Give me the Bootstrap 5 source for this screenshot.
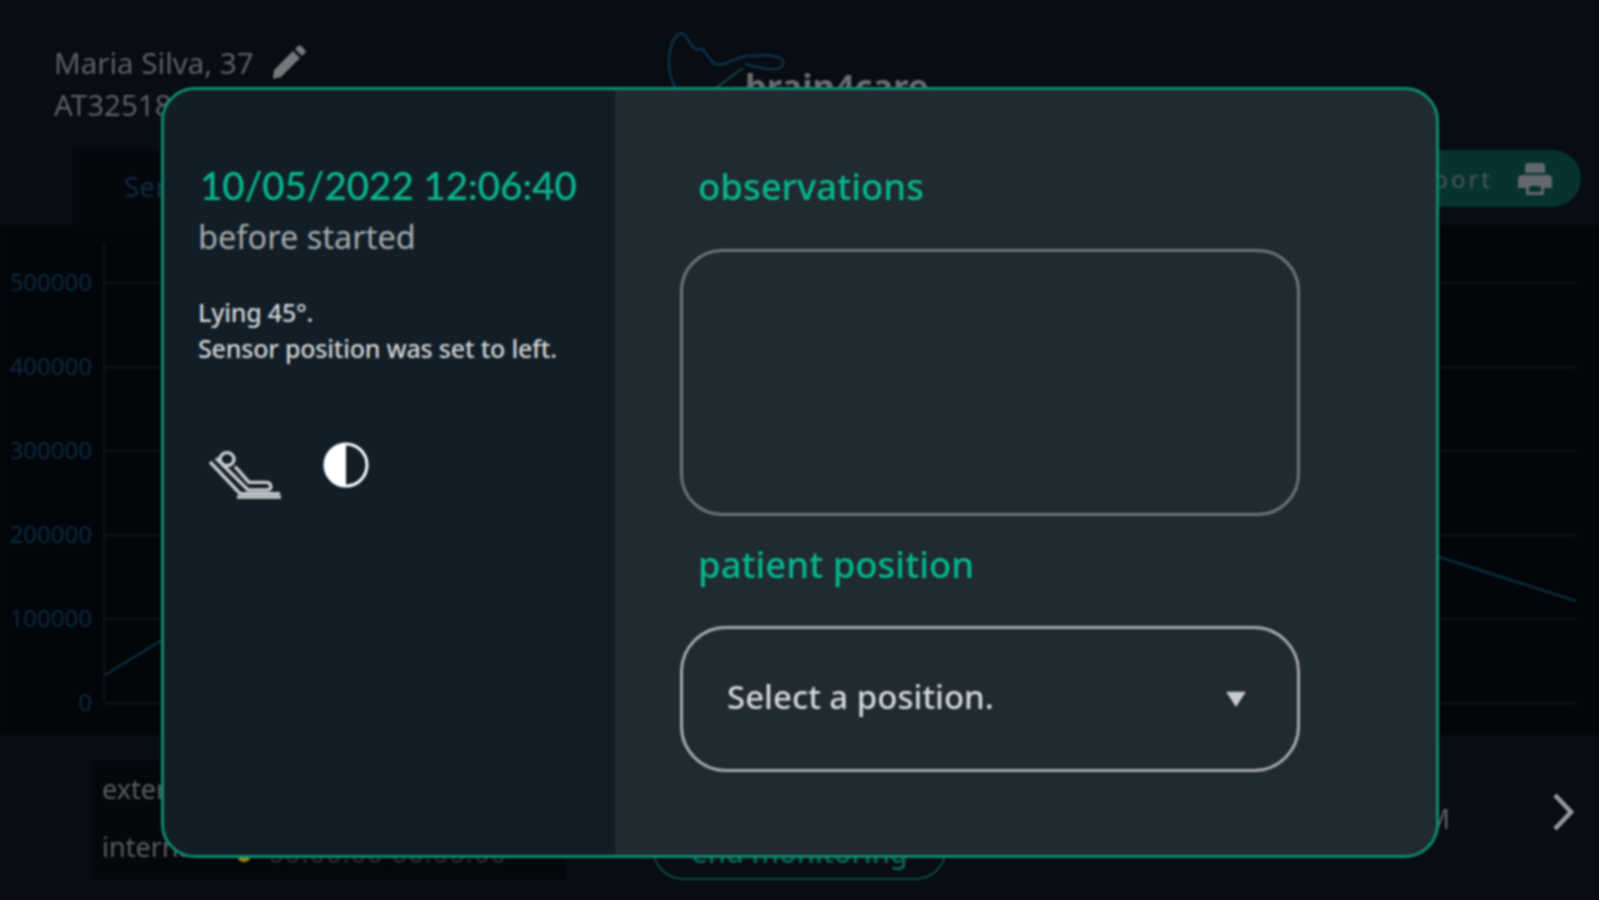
<!DOCTYPE html>
<html lang="en">
<head>
    <meta charset="UTF-8">
    <title>brain4care - monitoring</title>
    <link href="https://cdn.jsdelivr.net/npm/bootstrap@5.3.0/dist/css/bootstrap.min.css" rel="stylesheet">
    <style>
        html, body { height: 100%; overflow: hidden; }
        body { background: #080c13; font-family: "Noto Sans", "Lato", sans-serif; color: #5d6064; }
        .screen-wrap { width: 1599px; height: 900px; filter: blur(.8px); }
        .top-bar { height: 150px; padding: 42px 54px 0; }
        .patient-name { font-size: 29.5px; line-height: 42px; }
        .logo-box { width: 300px; margin-right: 580px; }
        .logo-word { font-size: 34.5px; margin: 18px 0 0 -45px; color: #6b6d70; font-weight: 700; }
        .tab-bar { height: 75px; }
        .tab-dark { margin-left: 72px; width: 180px; background: #04070c; color: #0d2c44; font-size: 28px; padding: 15px 52px; }
        .report-pill { width: 320px; height: 57px; margin: 0 18px 0 0; border-radius: 29px; background: #06332f; color: #4f5659; font-size: 24px; letter-spacing: 3px; }
        .print-ico { margin-right: 28px; }
        .chart-band { height: 510px; background: #020509; }
        .chart-band svg { display: block; }
        .chart-label { fill: #0c2b41; font-size: 24px; font-family: "Noto Sans", sans-serif; }
        .foot-bar { height: 165px; padding: 25px 18px 0 92px; }
        .legend-box { width: 473px; height: 120px; background: #04070c; padding: 0 10px; font-size: 27px; line-height: 58px; color: #5a5d60; }
        .legend-val { margin: 6px 0 0 18px; color: #2c2f32; letter-spacing: 1px; }
        .legend-dot { width: 14px; height: 14px; margin: 30px 0 0 36px; border-radius: 50%; background: #a08a12; flex-shrink: 0; }
        .stop-btn { width: 295px; height: 120px; margin-left: 87px; border: 2px solid #0b4a40; border-radius: 0 0 32px 32px; color: #0a6a58; font-size: 29px; padding-bottom: 5px; font-weight: 500; }
        .foot-clock { font-size: 27px; margin: 39px 101px 0 0; }
        .foot-arrow { margin: 32px 6px 0 0; }
        .dlg-box { position: absolute; left: 161px; top: 87px; width: 1278px; height: 771px; border: 3px solid #0e8a70; border-radius: 34px; overflow: hidden; background: #1f2a31; }
        .dlg-side { width: 451px; background: #121e27; padding: 71px 0 0 36px; }
        .dlg-date { font-size: 38.5px; line-height: 48px; color: #07b68e; font-family: "Lato", sans-serif; font-weight: 500; }
        .dlg-state { font-size: 32.5px; line-height: 46px; color: #a7abae; margin: 5px 0 0 -2px; }
        .dlg-note { font-size: 25px; line-height: 36px; color: #d2d5d7; margin: 34px 0 0 -2px; font-weight: 500; letter-spacing: -.2px; }
        .dlg-icons { margin-top: 82px; gap: 37px; padding-left: 7px; }
        .half-dot { margin-top: -7px; }
        .dlg-main { padding: 73px 0 0 65px; width: 685px; }
        .dlg-title { font-size: 36.5px; line-height: 46px; color: #07b68e; margin: 0 0 0 18px; font-weight: 500; }
        .dlg-area.form-control { width: 620px; height: 267px; margin-top: 40px; margin-bottom: 25px; background: transparent; border: 3px solid #6d7478; border-radius: 42px; resize: none; }
        .dlg-select.form-select { width: 620px; height: 146px; margin-top: 39px; padding: 0 0 4px 44px; background-color: transparent; color: #d7d9db; border: 3.5px solid #a5a9ac; border-radius: 46px; font-size: 33px; font-weight: 500; font-family: "Noto Sans", sans-serif; background-size: 22px 18px; background-position: right 50px center; background-image: url("data:image/svg+xml,%3csvg xmlns='http://www.w3.org/2000/svg' viewBox='0 0 24 20'%3e%3cpath fill='%23c9cccd' d='M1 2h22L12 19z'/%3e%3c/svg%3e"); }
    </style>
</head>
<body>
    <div class="screen-wrap position-relative">

        <header class="top-bar d-flex justify-content-between">
            <div class="patient-name">
                <div class="d-flex align-items-center gap-3">Maria Silva, 37
                    <svg width="36" height="36" viewBox="0 0 36 36"><path fill="#77797c" d="M3 34l1-9L23 6l7 7-19 19zM25 4l3-3c1-1 2-1 3 0l4 4c1 1 1 2 0 3l-3 3z"/></svg>
                </div>
                <div>AT325187</div>
            </div>
            <div class="logo-box d-flex">
                <svg width="125" height="70" viewBox="0 0 125 70" class="flex-shrink-0" style="margin-top:-14px">
                    <path fill="none" stroke="#0f3148" stroke-width="2.5" d="M12 62C0 45 2 15 14 6c8-5 10 14 18 16 6-6 10 8 18 14 8 4 20-8 36-8 20-2 34 0 32 8-2 8-18 6-38 0"/>
                    <path fill="none" stroke="#123c38" stroke-width="2.5" d="M12 62c10 6 26 8 36 0l30-22"/>
                </svg>
                <div class="logo-word">brain4care</div>
            </div>
        </header>

        <div class="tab-bar d-flex justify-content-between">
            <div class="tab-dark">Sensor</div>
            <div class="report-pill d-flex align-items-center justify-content-end gap-4">
                <span>export report</span>
                <svg class="print-ico" width="36" height="36" viewBox="0 0 36 36"><path fill="#62686b" d="M10 2h16l2 2v8H8V4zM5 14h26c2 0 4 2 4 4v9h-8v7H9v-7H1v-9c0-2 2-4 4-4zm9 11c-1 0-2 1-2 2v4h12v-4c0-1-1-2-2-2z"/></svg>
            </div>
        </div>

        <section class="chart-band">
            <svg width="1599" height="510" viewBox="0 0 1599 510">
                <g stroke="#12151a" stroke-width="2">
                    <path d="M104 20v455"/>
                    <path d="M104 58h1472M104 142h1472M104 226h1472M104 310h1472M104 394h1472M104 478h1472"/>
                </g>
                <g class="chart-label" text-anchor="end">
                    <text x="92" y="66">500000</text>
                    <text x="92" y="150">400000</text>
                    <text x="92" y="234">300000</text>
                    <text x="92" y="318">200000</text>
                    <text x="92" y="402">100000</text>
                    <text x="92" y="486">0</text>
                </g>
                <path fill="none" stroke="#0b2d3e" stroke-width="2.5" d="M105 450l60-37M1430 329l146 47"/>
            </svg>
        </section>

        <footer class="foot-bar d-flex align-items-start">
            <div class="legend-box">
                <div>external</div>
                <div class="d-flex align-items-start">internal <span class="legend-dot"></span><span class="legend-val">00:00:00 00:00:00</span></div>
            </div>
            <div class="stop-btn d-flex align-items-end justify-content-center">end monitoring</div>
            <div class="foot-clock ms-auto">12:06:40 PM</div>
            <svg class="foot-arrow" width="24" height="40" viewBox="0 0 24 40"><path fill="none" stroke="#9a9da0" stroke-width="4.5" d="M4 3l16 17L4 37"/></svg>
        </footer>

        <div class="dlg-box d-flex">
            <aside class="dlg-side">
                <div class="dlg-date">10/05/2022 12:06:40</div>
                <div class="dlg-state">before started</div>
                <div class="dlg-note">Lying 45°.<br>Sensor position was set to left.</div>
                <div class="dlg-icons d-flex align-items-start">
                    <svg width="78" height="52" viewBox="0 0 78 56" preserveAspectRatio="none">
                        <g fill="none" stroke="#c9cccd" stroke-width="3.5">
                            <circle cx="20" cy="12" r="7"/>
                            <path d="M3 15l30 34h40"/>
                            <path d="M9 11l32 34h20c4 0 4-8-2-8H42L28 20"/>
                            <path d="M30 53h44"/>
                        </g>
                    </svg>
                    <svg class="half-dot" width="48" height="48" viewBox="0 0 48 48">
                        <circle cx="24" cy="24" r="21" fill="none" stroke="#fff" stroke-width="3"/>
                        <path fill="#fff" d="M24 3a21 21 0 0 0 0 42z"/>
                    </svg>
                </div>
            </aside>
            <main class="dlg-main">
                <div class="dlg-title">observations</div>
                <textarea class="dlg-area form-control"></textarea>
                <div class="dlg-title">patient position</div>
                <select class="dlg-select form-select">
                    <option>Select a position.</option>
                </select>
            </main>
        </div>
    </div>

    <script src="https://cdn.jsdelivr.net/npm/bootstrap@5.3.0/dist/js/bootstrap.bundle.min.js"></script>
</body>
</html>
